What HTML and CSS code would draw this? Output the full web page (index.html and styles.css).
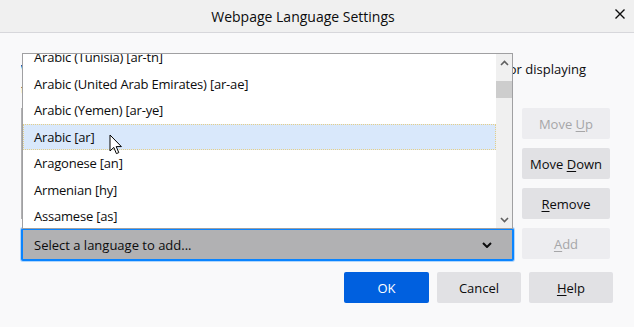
FILE: index.html
```html
<!DOCTYPE html>
<html lang="en">
<head>
  <meta charset="UTF-8" />
  <title>Webpage Language Settings</title>
  <link rel="stylesheet" href="styles.css">
</head>
<body>

<div class="titlebar">
  <span class="title">Webpage Language Settings</span>
  <svg class="close" width="10" height="10" viewBox="0 0 10 10"><path d="M0.5 0.5 L9.5 9.5 M9.5 0.5 L0.5 9.5" stroke="#0c0c0d" stroke-width="1.4"/></svg>
</div>

<div class="dialog">
  <div class="intro">
    <div class="line1"><span>Web pages are sometimes offered in more than one language. Choose languages for displaying</span></div>
    <div class="line2">these web pages, in order of preference</div>
  </div>

  <div class="main-row">
    <div class="active-list"></div>
    <div class="side-buttons">
      <button class="btn" disabled>Move <u>U</u>p</button>
      <button class="btn">Move <u>D</u>own</button>
      <button class="btn"><u>R</u>emove</button>
    </div>
  </div>

  <div class="add-row">
    <div class="select">
      <span>Select a language to add...</span>
      <svg class="chev" width="10" height="6" viewBox="0 0 10 6"><path d="M1 1 L5 5 L9 1" fill="none" stroke="#0c0c0d" stroke-width="2"/></svg>
    </div>
    <button class="btn" disabled><u>A</u>dd</button>
  </div>

  <div class="footer">
    <button class="btn primary">OK</button>
    <button class="btn">Cancel</button>
    <button class="btn"><u>H</u>elp</button>
  </div>
</div>

<!-- opened dropdown of the select -->
<div class="popup">
  <div class="items">
    <div class="item">Arabic (Tunisia) [ar-tn]</div>
    <div class="item">Arabic (United Arab Emirates) [ar-ae]</div>
    <div class="item">Arabic (Yemen) [ar-ye]</div>
    <div class="item selected">Arabic [ar]</div>
    <div class="item">Aragonese [an]</div>
    <div class="item">Armenian [hy]</div>
    <div class="item">Assamese [as]</div>
    <div class="item">Asturian [ast]</div>
  </div>
  <div class="scrollbar">
    <svg class="arrow" width="9" height="6" viewBox="0 0 9 6"><path d="M1 5 L4.5 1.5 L8 5" fill="none" stroke="#606060" stroke-width="1.6"/></svg>
    <div class="thumb"></div>
    <svg class="arrow down" width="9" height="6" viewBox="0 0 9 6"><path d="M1 1 L4.5 4.5 L8 1" fill="none" stroke="#606060" stroke-width="1.6"/></svg>
  </div>
</div>

<svg class="cursor" width="14" height="22" viewBox="0 0 14 22">
  <path d="M1 1 L1 17 L4.8 13.4 L7.4 19.6 L9.8 18.6 L7.2 12.6 L12.4 12.6 Z" fill="#fff" stroke="#000" stroke-width="1" stroke-linejoin="round"/>
</svg>

</body>
</html>
```

FILE: styles.css
```css
body {
  margin: 0;
  background-color: #f9f9fa;
  font-family: 'Open Sans', sans-serif;
  font-size: 13px;
  color: #0c0c0d;
  width: 634px;
  height: 327px;
  overflow: hidden;
  position: relative;
}

.titlebar {
  height: 32px;
  background-color: #f0f0f0;
  border-bottom: 1px solid #d7d7db;
  display: flex;
  align-items: center;
  justify-content: center;
  position: relative;
  font-size: 14px;
  padding-right: 28px;
}

.titlebar .close {
  position: absolute;
  left: 615px;
  top: 9px;
}

.dialog {
  padding: 0 24px 0 21px;
}

.intro {
  margin-top: 26px;
  line-height: 20px;
  height: 40px;
  overflow: hidden;
  white-space: nowrap;
}

.intro .line1 {
  display: flex;
  justify-content: flex-end;
  padding-right: 24px;
}

.main-row {
  display: flex;
  gap: 9px;
  margin-top: 9px;
}

.active-list {
  flex: 1;
  height: 109px;
  background: #fff;
  border: 1px solid #b1b1b3;
}

.side-buttons {
  display: flex;
  flex-direction: column;
  gap: 9px;
}

.btn {
  font-family: inherit;
  font-size: 13px;
  color: #0c0c0d;
  background-color: #e1e1e4;
  border: none;
  border-radius: 2px;
  height: 31px;
  width: 88px;
  padding: 0;
}

.btn u {
  text-decoration-thickness: 1px;
  text-underline-offset: 2px;
}

.btn:disabled {
  background-color: #ededf0;
  color: #a6a6a8;
}

.add-row {
  display: flex;
  gap: 8px;
  margin-top: 9px;
  align-items: flex-start;
}

.select {
  flex: 1;
  height: 29px;
  background-color: #b1b1b3;
  border: 2px solid #0a84ff;
  border-radius: 2px;
  box-shadow: 0 0 0 1px rgba(10, 132, 255, 0.3);
  display: flex;
  align-items: center;
  justify-content: space-between;
  padding: 0 20px 0 11px;
}

.footer {
  display: flex;
  justify-content: flex-end;
  gap: 8px;
  margin-top: 11px;
  margin-right: -3px;
}

.footer .btn {
  width: 84px;
}

.footer .primary {
  width: 85px;
  background-color: #0060df;
  color: #fff;
}

.popup {
  position: absolute;
  left: 22px;
  top: 53px;
  width: 489px;
  height: 174px;
  background: #fff;
  border: 1px solid #a0a0a2;
  overflow: hidden;
  display: flex;
}

.items {
  flex: 1;
  margin-top: -10px;
}

.item {
  height: 26.5px;
  line-height: 26.5px;
  padding-left: 11px;
  white-space: nowrap;
  letter-spacing: -0.2px;
}

.item.selected {
  background-color: #d9e8fb;
  outline: 1px dotted #e6cf86;
  outline-offset: -1px;
}

.scrollbar {
  width: 16px;
  background-color: #f0f0f0;
  display: flex;
  flex-direction: column;
  align-items: center;
  position: relative;
}

.scrollbar .arrow {
  margin-top: 6px;
}

.scrollbar .arrow.down {
  position: absolute;
  bottom: 5px;
  margin: 0;
}

.thumb {
  width: 16px;
  height: 17px;
  background-color: #cdcdcd;
  margin-top: 15px;
}

.cursor {
  position: absolute;
  left: 109px;
  top: 134px;
}
```
